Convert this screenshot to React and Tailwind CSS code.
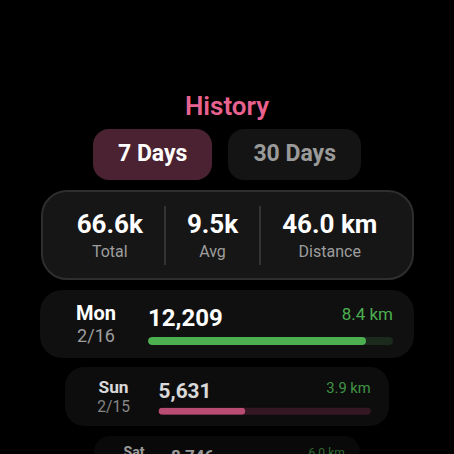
import React from "react";

function DayRow({ day, date, steps, km, pct, color, track, wrapClass, rowClass }) {
  return (
    <div className={wrapClass}>
      <div className={"w-[374px] h-[68px] shrink-0 rounded-[22px] bg-[#101010] flex items-center pl-[16px] pr-[21px] gap-[12px] " + rowClass}>
        <div className="w-[80px] flex flex-col items-center">
          <div className="text-[20px] leading-[24px] font-bold text-white">{day}</div>
          <div className="text-[18px] leading-[22px] text-[#9e9e9e]">{date}</div>
        </div>
        <div className="flex-1 flex flex-col">
          <div className="flex justify-between items-start">
            <div className="text-[24px] leading-[28px] font-bold text-white">{steps}</div>
            <div className="text-[17px] leading-[20px] text-[#4caf50]">{km}</div>
          </div>
          <div className={"mt-[5px] h-[8px] rounded-full overflow-hidden " + track}>
            <div className={"h-full rounded-full " + color} style={{ width: pct + "%" }} />
          </div>
        </div>
      </div>
    </div>
  );
}

export default function App() {
  return (
    <div
      className="w-[454px] h-[454px] bg-black overflow-hidden flex flex-col items-center pt-[91px]"
      style={{ fontFamily: "Roboto, 'Noto Sans', sans-serif" }}
    >
      <div className="text-[26px] leading-[30px] font-semibold text-[#e8628f]">History</div>
      <div className="mt-[8px] flex gap-[16px]">
        <div className="h-[51px] px-[25px] rounded-[16px] bg-[#4b2231] flex items-center text-[23px] font-bold text-white">
          7 Days
        </div>
        <div className="h-[51px] px-[25px] rounded-[16px] bg-[#141414] flex items-center text-[23px] font-bold text-[#9a9a9a]">
          30 Days
        </div>
      </div>
      <div className="mt-[10px] w-[373px] h-[90px] shrink-0 rounded-[26px] bg-[#161616] border-2 border-[#2e2e2e] flex items-center justify-center">
        <div className="px-[21px] flex flex-col items-center">
          <div className="text-[26px] leading-[30px] font-bold text-white">66.6k</div>
          <div className="mt-[3px] text-[16px] leading-[20px] text-[#9e9e9e]">Total</div>
        </div>
        <div className="w-[2px] h-[59px] bg-[#333333]" />
        <div className="px-[21px] flex flex-col items-center">
          <div className="text-[26px] leading-[30px] font-bold text-white">9.5k</div>
          <div className="mt-[3px] text-[16px] leading-[20px] text-[#9e9e9e]">Avg</div>
        </div>
        <div className="w-[2px] h-[59px] bg-[#333333]" />
        <div className="px-[21px] flex flex-col items-center">
          <div className="text-[26px] leading-[30px] font-bold text-white">46.0 km</div>
          <div className="mt-[3px] text-[16px] leading-[20px] text-[#9e9e9e]">Distance</div>
        </div>
      </div>
      <DayRow
        day="Mon"
        date="2/16"
        steps="12,209"
        km="8.4 km"
        pct={89}
        color="bg-[#4caf50]"
        track="bg-[#1b2a1c]"
        wrapClass="mt-[10px] flex justify-center"
        rowClass=""
      />
      <DayRow
        day="Sun"
        date="2/15"
        steps="5,631"
        km="3.9 km"
        pct={41}
        color="bg-[#d95a88]"
        track="bg-[#3f1c2a]"
        wrapClass="mt-[9px] h-[60px] w-[374px] flex justify-center shrink-0"
        rowClass="origin-top scale-[0.866] opacity-[0.85]"
      />
      <DayRow
        day="Sat"
        date="2/14"
        steps="8,746"
        km="6.0 km"
        pct={64}
        color="bg-[#d95a88]"
        track="bg-[#3f1c2a]"
        wrapClass="mt-[9px] h-[48px] w-[374px] flex justify-center shrink-0"
        rowClass="origin-top scale-[0.71] opacity-[0.6]"
      />
    </div>
  );
}
